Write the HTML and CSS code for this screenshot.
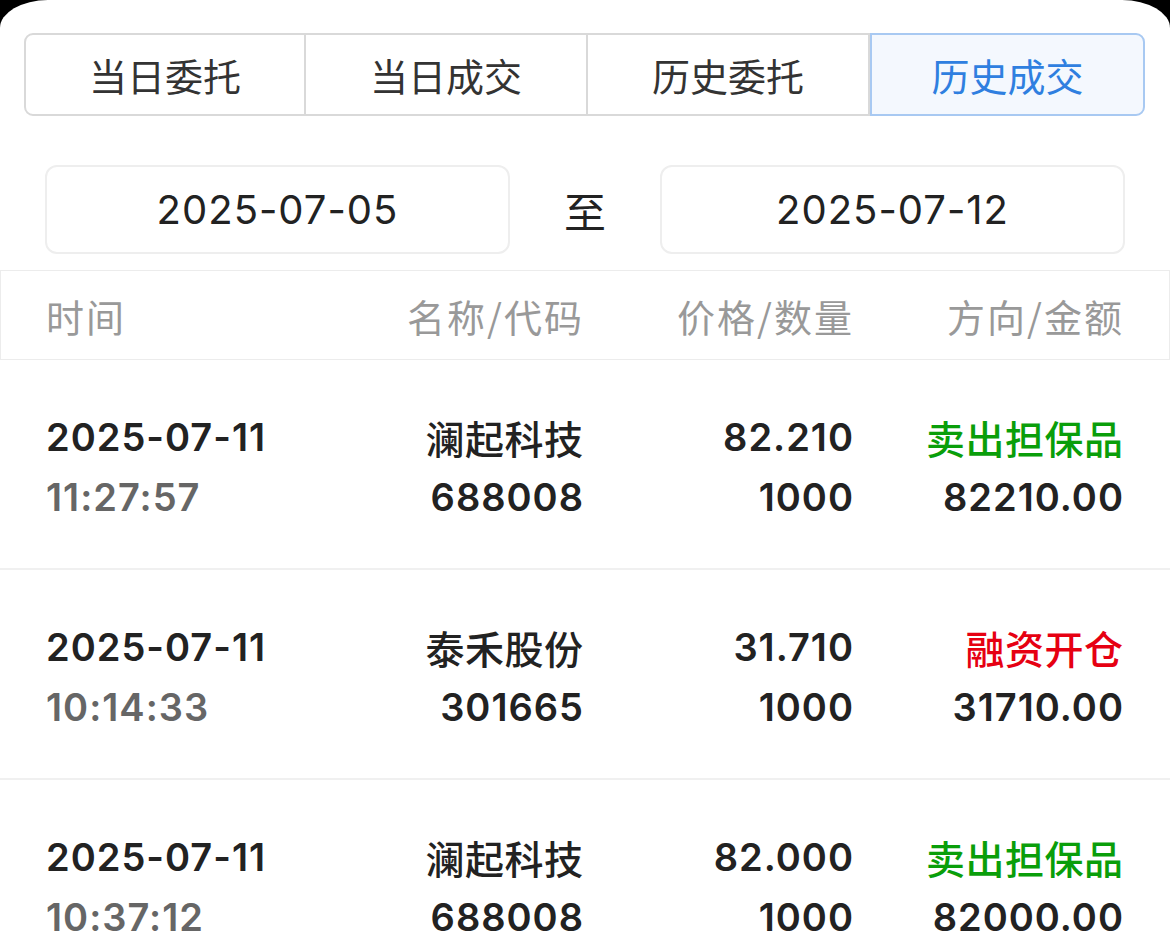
FILE: index.html
```html
<!DOCTYPE html>
<html lang="zh-CN">
<head>
<meta charset="utf-8">
<title>历史成交</title>
<link rel="stylesheet" href="styles.css">
</head>
<body>
<div class="panel">
  <div class="tabs">
    <div class="tab">当日委托</div>
    <div class="tab">当日成交</div>
    <div class="tab">历史委托</div>
    <div class="tab active">历史成交</div>
  </div>
  <div class="dates">
    <div class="date-box">2025-07-05</div>
    <div class="to">至</div>
    <div class="date-box">2025-07-12</div>
  </div>
  <div class="grid head">
    <div class="c1">时间</div>
    <div class="cr">名称/代码</div>
    <div class="cr">价格/数量</div>
    <div class="cr">方向/金额</div>
  </div>
  <div class="grid row">
    <div class="c1"><div class="date">2025-07-11</div><div class="time">11:27:57</div></div>
    <div class="cr"><div class="name">澜起科技</div><div class="num">688008</div></div>
    <div class="cr"><div class="num">82.210</div><div class="num">1000</div></div>
    <div class="cr"><div class="name green">卖出担保品</div><div class="num">82210.00</div></div>
  </div>
  <div class="grid row">
    <div class="c1"><div class="date">2025-07-11</div><div class="time">10:14:33</div></div>
    <div class="cr"><div class="name">泰禾股份</div><div class="num">301665</div></div>
    <div class="cr"><div class="num">31.710</div><div class="num">1000</div></div>
    <div class="cr"><div class="name red">融资开仓</div><div class="num">31710.00</div></div>
  </div>
  <div class="grid row">
    <div class="c1"><div class="date">2025-07-11</div><div class="time">10:37:12</div></div>
    <div class="cr"><div class="name">澜起科技</div><div class="num">688008</div></div>
    <div class="cr"><div class="num">82.000</div><div class="num">1000</div></div>
    <div class="cr"><div class="name green">卖出担保品</div><div class="num">82000.00</div></div>
  </div>
</div>
</body>
</html>
```
FILE: styles.css
```css
html, body {
  margin: 0;
  padding: 0;
  background: #000;
  height: 945px;
  overflow: hidden;
}
body {
  font-family: Inter, "Noto Sans CJK SC", sans-serif;
  color: #222;
}
.panel {
  background: #fff;
  width: 1170px;
  height: 945px;
  border-radius: 48px 48px 0 0 / 28px 28px 0 0;
  padding-top: 33px;
  box-sizing: border-box;
  overflow: hidden;
}
.tabs {
  display: flex;
  margin: 0 25px 0 24px;
  height: 83px;
}
.tab {
  flex: 0 0 282px;
  display: flex;
  align-items: center;
  justify-content: center;
  border: 2px solid #d9d9d9;
  border-left-width: 0;
  font-family: "Noto Sans CJK SC", sans-serif;
  font-size: 38px;
  color: #333;
  box-sizing: border-box;
}
.tab:first-child {
  border-left-width: 2px;
  border-radius: 9px 0 0 9px;
}
.tab.active {
  flex: 1 1 auto;
  border: 2px solid #a8c9f2;
  border-radius: 0 9px 9px 0;
  background: #f4f8fe;
  color: #2f7fe0;
}
.dates {
  display: flex;
  align-items: center;
  margin: 49px 45px 0 45px;
  height: 89px;
}
.date-box {
  width: 465px;
  height: 89px;
  box-sizing: border-box;
  border: 2px solid #eeeeee;
  border-radius: 12px;
  display: flex;
  align-items: center;
  justify-content: center;
  font-size: 40px;
  letter-spacing: 1px;
  color: #222;
}
.to {
  flex: 1;
  text-align: center;
  font-family: "Noto Sans CJK SC", sans-serif;
  font-size: 42px;
  color: #222;
}
.grid {
  display: grid;
  grid-template-columns: 1fr 270px 270px 270px;
  padding: 0 47px 0 45px;
}
.head {
  margin-top: 16px;
  height: 90px;
  box-sizing: border-box;
  border: 1px solid #ececec;
  align-items: center;
  font-family: "Noto Sans CJK SC", sans-serif;
  font-size: 38px;
  letter-spacing: 2px;
  color: #999;
}
.head .cr {
  margin-right: -2px;
}
.cr {
  text-align: right;
}
.row {
  height: 210px;
  box-sizing: border-box;
  border-bottom: 2px solid #f0f0f0;
  padding-top: 47px;
}
.row > div > div {
  height: 60px;
  line-height: 60px;
  font-size: 38px;
  font-weight: 600;
  letter-spacing: 1px;
  white-space: nowrap;
}
.row .c1 > div {
  margin-left: 1px;
}
.row .cr > div {
  margin-right: -1px;
}
.time {
  color: #666;
}
.row .name {
  font-family: "Noto Sans CJK SC", sans-serif;
  font-weight: 500;
  font-size: 39px;
  letter-spacing: 0.5px;
}
.row .cr > .name {
  margin-right: -0.5px;
}
.green { color: #0a9e0a; }
.red { color: #e60012; }
```
